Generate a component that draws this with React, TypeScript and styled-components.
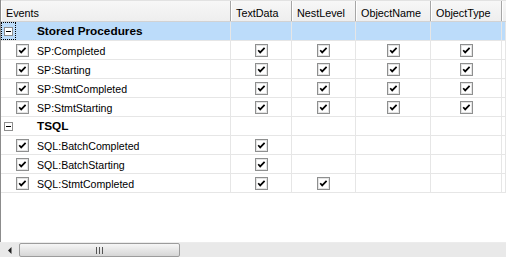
import React from "react";
import styled, { createGlobalStyle } from "styled-components";

const Global = createGlobalStyle`
  html, body { margin: 0; padding: 0; background: #ffffff; }
  body { font-family: "Liberation Sans", Arial, sans-serif; }
`;

const COLS = "230px 61px 64px 75px 71px 1fr";

const Frame = styled.div`
  width: 506px;
  height: 257px;
  display: flex;
  flex-direction: column;
  background: #ffffff;
  overflow: hidden;
  font-family: "Liberation Sans", Arial, sans-serif;
  color: #000;
`;

const Viewport = styled.div`
  flex: 1;
  display: flex;
  flex-direction: column;
  border-left: 1px solid #8c8c8c;
`;

const HeaderRow = styled.div`
  display: grid;
  grid-template-columns: ${COLS};
  background: linear-gradient(#f7f7f7, #eeeeee);
  border-top: 1px solid #e2e2e2;
  border-bottom: 1px solid #d2d2d2;
  box-sizing: border-box;
  height: 22px;
`;

const HeaderCell = styled.div`
  box-sizing: border-box;
  border-right: 1px solid #a6a6a6;
  box-shadow: inset 1px 0 0 #ffffff;
  padding: 4px 0 0 5px;
  font-size: 10.8px;
  line-height: 17px;
  white-space: nowrap;
  overflow: hidden;
`;

const Row = styled.div<{ $selected?: boolean }>`
  display: grid;
  grid-template-columns: ${COLS};
  height: 19px;
  box-sizing: border-box;
  border-bottom: 1px solid #e6e6e6;
  background: ${(p) => (p.$selected ? "#bcdcfa" : "transparent")};
`;

const Cell = styled.div<{ $center?: boolean }>`
  box-sizing: border-box;
  border-right: 1px solid #e6e6e6;
  display: flex;
  align-items: center;
  justify-content: ${(p) => (p.$center ? "center" : "flex-start")};
  overflow: hidden;
`;

const EventCell = styled(Cell)<{ $group?: boolean }>`
  padding-left: ${(p) => (p.$group ? "0px" : "15px")};
  gap: ${(p) => (p.$group ? "21px" : "8px")};
`;

const Focus = styled.div<{ $focused?: boolean }>`
  width: 15px;
  height: 18px;
  box-sizing: border-box;
  border: 1px dotted ${(p) => (p.$focused ? "#000" : "transparent")};
  display: flex;
  align-items: center;
  justify-content: center;
`;

const Label = styled.span<{ $bold?: boolean }>`
  font-size: ${(p) => (p.$bold ? "11.8px" : "10.6px")};
  font-weight: ${(p) => (p.$bold ? 700 : 400)};
  padding-top: ${(p) => (p.$bold ? "0px" : "1px")};
  white-space: nowrap;
`;

const Blank = styled.div`
  flex: 1;
`;

const ScrollBar = styled.div`
  height: 15px;
  display: flex;
  align-items: stretch;
  background: #e9e9e9;
  border-top: 1px solid #ececec;
  box-sizing: border-box;
`;

const ArrowBox = styled.div`
  width: 19px;
  display: flex;
  align-items: center;
  justify-content: center;
`;

const Thumb = styled.div`
  width: 161px;
  box-sizing: border-box;
  border: 1px solid #9c9c9c;
  border-radius: 2px;
  background: linear-gradient(#f6f6f6, #e6e6e6 50%, #d6d6d6);
  display: flex;
  align-items: center;
  justify-content: center;
`;

const CheckBox = () => (
  <svg width="13" height="13" viewBox="0 0 13 13">
    <rect x="0.5" y="0.5" width="12" height="12" fill="#ffffff" stroke="#8e8f8f" />
    <rect x="1.5" y="1.5" width="10" height="10" fill="none" stroke="#e4e4e4" />
    <path d="M3.2 6.2 L5.2 8.4 L9.6 3.8" fill="none" stroke="#000" strokeWidth="1.7" />
  </svg>
);

const MinusBox = () => (
  <svg width="9" height="9" viewBox="0 0 9 9">
    <rect x="0.5" y="0.5" width="8" height="8" fill="#ffffff" stroke="#8e8e8e" />
    <rect x="2" y="4" width="5" height="1" fill="#000" />
  </svg>
);

const LeftArrow = () => (
  <svg width="4" height="7" viewBox="0 0 4 7">
    <path d="M3.5 0 L0 3.5 L3.5 7 Z" fill="#202020" />
  </svg>
);

const Grip = () => (
  <svg width="8" height="7" viewBox="0 0 8 7">
    <rect x="0" y="0" width="1" height="7" fill="#555" />
    <rect x="3" y="0" width="1" height="7" fill="#555" />
    <rect x="6" y="0" width="1" height="7" fill="#555" />
  </svg>
);

const headers = ["Events", "TextData", "NestLevel", "ObjectName", "ObjectType", ""];

type Item = { name: string; checks: boolean[] };
type Group = { name: string; focused?: boolean; selected?: boolean; items: Item[] };

const groups: Group[] = [
  {
    name: "Stored Procedures",
    focused: true,
    selected: true,
    items: [
      { name: "SP:Completed", checks: [true, true, true, true] },
      { name: "SP:Starting", checks: [true, true, true, true] },
      { name: "SP:StmtCompleted", checks: [true, true, true, true] },
      { name: "SP:StmtStarting", checks: [true, true, true, true] },
    ],
  },
  {
    name: "TSQL",
    items: [
      { name: "SQL:BatchCompleted", checks: [true, false, false, false] },
      { name: "SQL:BatchStarting", checks: [true, false, false, false] },
      { name: "SQL:StmtCompleted", checks: [true, true, false, false] },
    ],
  },
];

export default function App() {
  return (
    <>
      <Global />
      <Frame>
        <Viewport>
          <HeaderRow>
            {headers.map((h, i) => (
              <HeaderCell key={i}>{h}</HeaderCell>
            ))}
          </HeaderRow>
          {groups.map((g) => (
            <React.Fragment key={g.name}>
              <Row $selected={g.selected}>
                <EventCell $group>
                  <Focus $focused={g.focused}>
                    <MinusBox />
                  </Focus>
                  <Label $bold>{g.name}</Label>
                </EventCell>
                <Cell />
                <Cell />
                <Cell />
                <Cell />
                <Cell />
              </Row>
              {g.items.map((it) => (
                <Row key={it.name}>
                  <EventCell>
                    <CheckBox />
                    <Label>{it.name}</Label>
                  </EventCell>
                  {it.checks.map((c, i) => (
                    <Cell key={i} $center>
                      {c && <CheckBox />}
                    </Cell>
                  ))}
                  <Cell />
                </Row>
              ))}
            </React.Fragment>
          ))}
          <Blank />
        </Viewport>
        <ScrollBar>
          <ArrowBox>
            <LeftArrow />
          </ArrowBox>
          <Thumb>
            <Grip />
          </Thumb>
        </ScrollBar>
      </Frame>
    </>
  );
}
